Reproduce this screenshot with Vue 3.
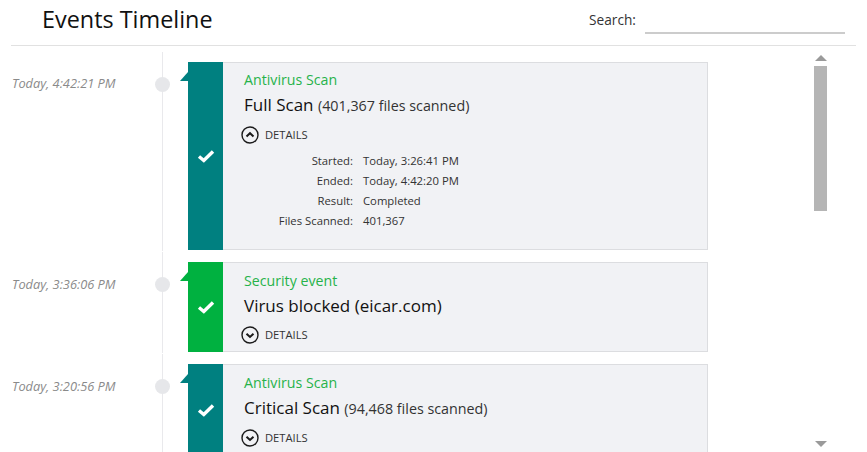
<script setup>
const events = [
  { time: 'Today, 4:42:21 PM', kind: 'Antivirus Scan', title: 'Full Scan', note: '(401,367 files scanned)', color: 'teal', open: true,
    details: [['Started:', 'Today, 3:26:41 PM'], ['Ended:', 'Today, 4:42:20 PM'], ['Result:', 'Completed'], ['Files Scanned:', '401,367']] },
  { time: 'Today, 3:36:06 PM', kind: 'Security event', title: 'Virus blocked (eicar.com)', note: '', color: 'green', open: false, details: [] },
  { time: 'Today, 3:20:56 PM', kind: 'Antivirus Scan', title: 'Critical Scan', note: '(94,468 files scanned)', color: 'teal', open: false, details: [] },
]
</script>

<template>
  <div class="page">
    <header class="header">
      <h1 class="title">Events Timeline</h1>
      <label class="search">
        <span class="search-label">Search:</span>
        <span class="search-input"></span>
      </label>
    </header>
    <div class="body">
      <div class="list">
        <section v-for="e in events" :key="e.time" class="row">
          <div class="time">{{ e.time }}</div>
          <div class="rail"><span class="dot"></span></div>
          <article class="card">
            <div class="band" :class="e.color">
              <span class="tag" :class="e.color"></span>
              <svg class="check" width="18" height="14" viewBox="0 0 18 14">
                <path d="M2 7.5 L6.8 11.5 L16 2.5" fill="none" stroke="#fff" stroke-width="3.4" />
              </svg>
            </div>
            <div class="content">
              <div class="kind">{{ e.kind }}</div>
              <div class="heading">{{ e.title }} <span v-if="e.note" class="note">{{ e.note }}</span></div>
              <div class="toggle">
                <svg width="18" height="18" viewBox="0 0 18 18">
                  <circle cx="9" cy="9" r="8" fill="none" stroke="#1a1a1a" stroke-width="1.4" />
                  <path :d="e.open ? 'M5.5 10.5 L9 7.2 L12.5 10.5' : 'M5.5 7.7 L9 11 L12.5 7.7'" fill="none" stroke="#1a1a1a" stroke-width="2" />
                </svg>
                <span>DETAILS</span>
              </div>
              <dl v-if="e.open" class="details">
                <div v-for="d in e.details" :key="d[0]" class="detail">
                  <dt>{{ d[0] }}</dt>
                  <dd>{{ d[1] }}</dd>
                </div>
              </dl>
            </div>
          </article>
        </section>
      </div>
      <div class="scrollbar">
        <span class="arrow up"></span>
        <span class="thumb"></span>
        <span class="arrow down"></span>
      </div>
    </div>
  </div>
</template>

<style>
html, body { margin: 0; background: #fff; overflow: hidden; }
</style>

<style scoped>
.page {
  width: 867px;
  height: 452px;
  overflow: hidden;
  font-family: "Open Sans", "Noto Sans", sans-serif;
  color: #1a1a1a;
  display: flex;
  flex-direction: column;
}
.header {
  height: 45px;
  margin: 0 11px;
  padding: 0 11px 0 31px;
  border-bottom: 1px solid #e1e1e1;
  display: flex;
  align-items: flex-start;
  justify-content: space-between;
  flex: none;
}
.title { margin: 3px 0 0; font-size: 23.4px; font-weight: 400; line-height: 32px; color: #111; }
.search { display: flex; align-items: flex-start; }
.search-label { font-size: 13.7px; line-height: 19px; color: #333; width: 56px; padding-top: 10px; }
.search-input { width: 200px; height: 34px; border-bottom: 2px solid #ccc; box-sizing: border-box; }
.body { flex: 1; display: flex; min-height: 0; padding-top: 4px; overflow: hidden; }
.list { width: 814px; flex: none; }
.row { display: flex; position: relative; padding: 11px 0 1px; }
.row:first-child { padding-top: 12px; }
.time {
  width: 155px;
  flex: none;
  box-sizing: border-box;
  padding: 14px 0 0 12px;
  font-size: 12.8px;
  line-height: 17px;
  font-style: italic;
  color: #8a8a8a;
  white-space: nowrap;
}
.row:first-child .time { padding-top: 13px; }
.rail { width: 33px; flex: none; position: relative; }
.rail::before { content: ""; position: absolute; left: 7px; top: -10px; bottom: -1px; width: 1px; background: #e9e9ec; }
.dot { position: absolute; left: 0; top: 15px; width: 15px; height: 15px; border-radius: 50%; background: #e6e7ea; }
.card { width: 520px; display: flex; background: #f1f2f5; box-sizing: border-box; border: 1px solid #dcdde0; border-left: 0; }
.band { width: 35px; flex: none; position: relative; display: flex; align-items: center; justify-content: center; margin: -1px 0; }
.teal { background: #008080; }
.green { background: #00b140; }
.tag { position: absolute; left: -8px; top: 10px; width: 8px; height: 9px; clip-path: polygon(100% 0, 100% 100%, 0 100%); }
.content { padding: 8px 0 0 21px; flex: 1; min-width: 0; }
.row:first-child .content { padding-top: 7px; }
.kind { font-size: 14.2px; line-height: 20px; color: #27b24a; }
.heading { font-size: 17px; line-height: 24px; margin-top: 3px; color: #111; white-space: nowrap; }
.note { font-size: 14.3px; color: #333; }
.toggle { display: flex; align-items: center; gap: 6px; font-size: 11.2px; line-height: 18px; margin-top: 8px; color: #333; padding-bottom: 7px; margin-left: -3px; }
.details { margin: -2px 0 19px; padding-top: 1px; }
.detail { display: flex; height: 20px; align-items: center; font-size: 11.3px; color: #333; }
.detail dt { width: 109px; text-align: right; flex: none; }
.detail dd { margin: 0 0 0 10px; }
.scrollbar { width: 13px; flex: none; display: flex; flex-direction: column; align-items: center; padding-top: 5px; height: 397px; box-sizing: border-box; }
.arrow { width: 0; height: 0; border-left: 6.5px solid transparent; border-right: 6.5px solid transparent; }
.up { border-bottom: 6px solid #9a9a9a; }
.thumb { width: 13px; height: 145px; background: #b5b5b5; margin-top: 5px; }
.down { border-top: 6px solid #9a9a9a; margin-top: auto; }
</style>
